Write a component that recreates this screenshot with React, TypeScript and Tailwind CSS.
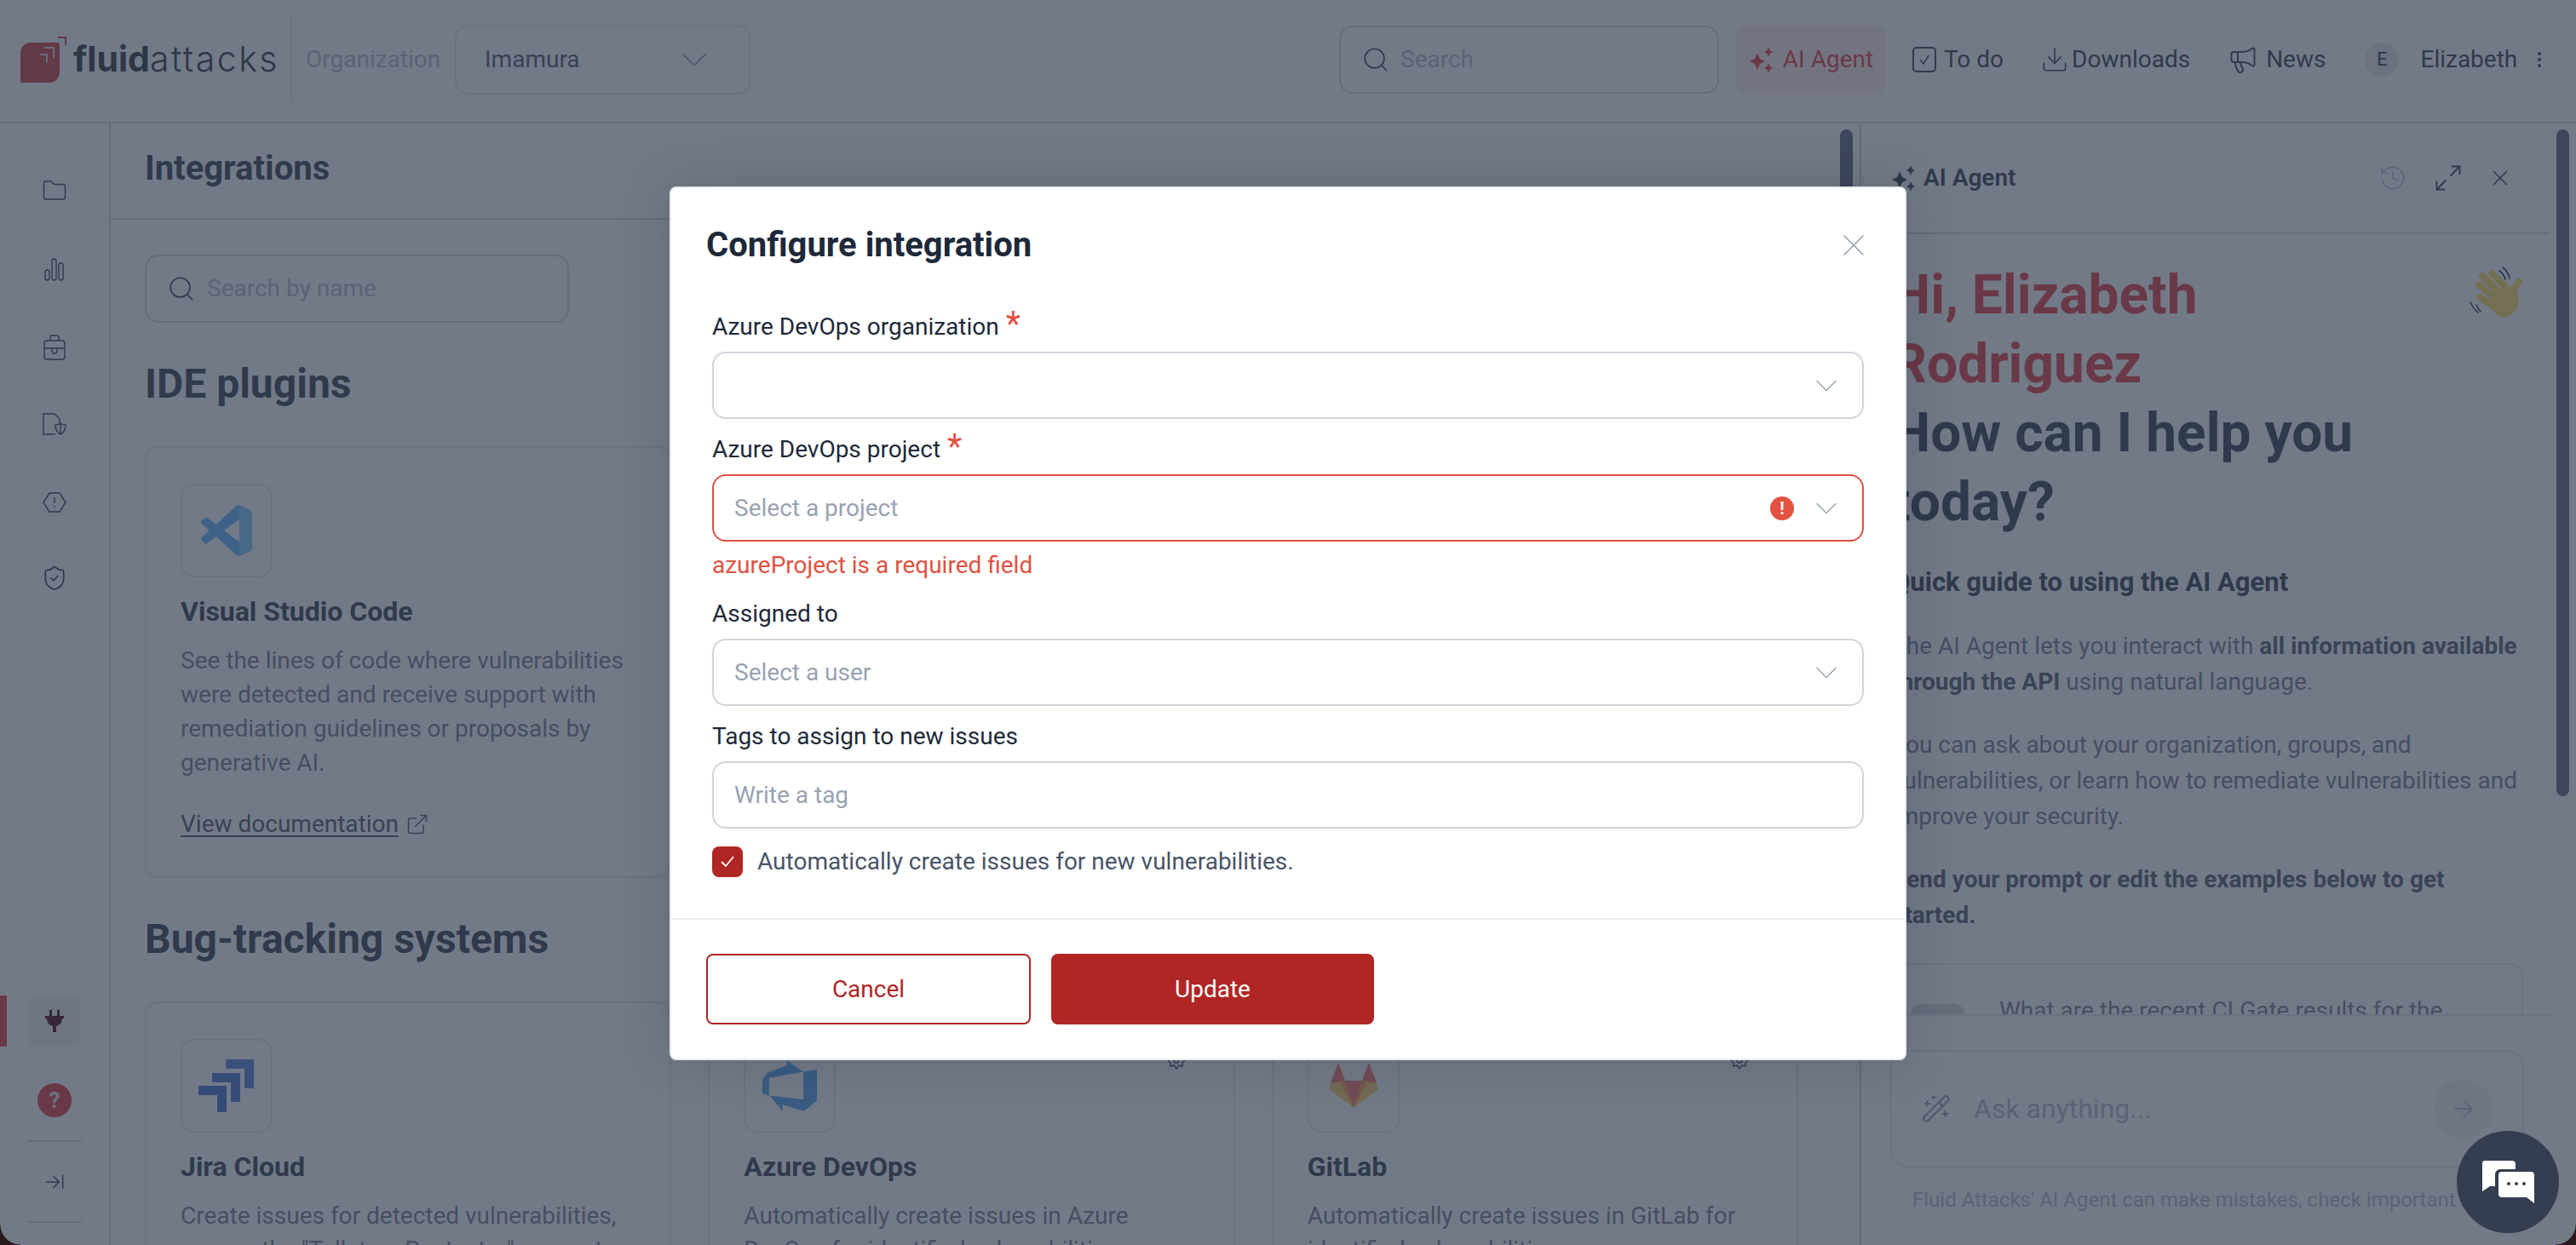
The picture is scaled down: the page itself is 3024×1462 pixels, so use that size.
import {
  ArrowRight, ArrowRightToLine, ChevronDown, Download, ExternalLink, Folder, History, Maximize2,
  Megaphone, Search, ShieldCheck, WandSparkles, X,
} from 'lucide-react';
import type { ReactNode } from 'react';

function Sparkle({ size = 32, className = '' }: { size?: number; className?: string }) {
  return (
    <svg width={size} height={size} viewBox="0 0 32 32" className={className} fill="currentColor">
      <path d="M11 8 14 15 20 18 14 21 11 28 8 21 2 18 8 15Z" />
      <path d="M24 1 25.5 5 29 7 25.5 9 24 13 22.5 9 19 7 22.5 5Z" />
      <path d="M24 20 25.5 24 29 26 25.5 28 24 32 22.5 28 19 26 22.5 24Z" />
    </svg>
  );
}

function Logo() {
  return (
    <svg width="56" height="56" viewBox="0 0 56 56" className="shrink-0">
      <path d="M2 20a12 12 0 0 1 12-12h32a2 2 0 0 1 2 2v33a12 12 0 0 1-12 12H2Z" fill="#d65f5e" />
      <path d="M30 14h11v12M25 22h8v10" stroke="#d9dbe0" strokeWidth="2" fill="none" />
      <path d="M46 2h9v9" stroke="#d65f5e" strokeWidth="2" fill="none" />
    </svg>
  );
}

function TopLink({ icon, label, gap = 'gap-[9px]', textClass = 'text-[#555f6e]' }: { icon: ReactNode; label: string; gap?: string; textClass?: string }) {
  return (
    <div className={`flex items-center text-[28px] ${gap} ${textClass}`}>
      {icon}
      <span>{label}</span>
    </div>
  );
}

function Header() {
  return (
    <header className="flex h-[145px] shrink-0 items-center border-b-2 border-[#dcdcde] pb-[4px] pl-[22px]">
      <Logo />
      <div className="ml-[8px] w-[255px] font-['Inter',sans-serif] text-[41px] leading-none text-[#525762]">
        <span className="font-bold">fluid</span>
        <span className="font-light tracking-[2.5px]">attacks</span>
      </div>
      <div className="h-[100px] w-[2px] bg-[#ebebed]" />
      <span className="ml-[16px] w-[175px] text-[28px] text-[#c0c5d2]">Organization</span>
      <div className="flex h-[82px] w-[347px] items-center justify-between rounded-[16px] border-2 border-[#ebebed] pl-[33px] pr-[37px] text-[28px] text-[#6b7484]">
        <span>Imamura</span>
        <ChevronDown size={54} strokeWidth={0.7} className="text-[#9ba2b1]" />
      </div>
      <div className="ml-[691px] flex h-[80px] w-[446px] items-center rounded-[16px] border-2 border-[#dcdcde] pl-[24px] text-[28px] text-[#c0c5d2]">
        <Search size={34} strokeWidth={1.2} className="text-[#555f6e]" />
        <span className="ml-[12px]">Search</span>
      </div>
      <div className="ml-[19px] flex h-[80px] w-[177px] items-center justify-center rounded-[12px] bg-[#fff1f0]">
        <TopLink icon={<Sparkle size={32} className="text-[#e85c5f]" />} label="AI Agent" textClass="text-[#e85c5f]" />
      </div>
      <div className="ml-[31px] flex items-center">
        <TopLink
          label="To do"
          icon={
            <svg width="28" height="32" viewBox="0 0 28 32" fill="none" stroke="currentColor" strokeWidth="2">
              <rect x="1" y="2" width="26" height="28" rx="4" />
              <path d="m9 16 4 5 6-10" strokeWidth="1.5" />
            </svg>
          }
        />
      </div>
      <div className="ml-[43px]">
        <TopLink icon={<Download size={34} strokeWidth={1.2} />} label="Downloads" gap="gap-[3px]" />
      </div>
      <div className="ml-[44px]">
        <TopLink icon={<Megaphone size={36} strokeWidth={1.3} />} label="News" />
      </div>
      <div className="ml-[46px] flex h-[40px] w-[40px] items-center justify-center rounded-full bg-[#ebebed] text-[22px] text-[#555f6e]">E</div>
      <span className="ml-[25px] text-[28px] text-[#555f6e]">Elizabeth</span>
      <div className="ml-[24px] flex flex-col gap-[3px]">
        <i className="h-[4px] w-[4px] rounded-full bg-[#555f6e]" />
        <i className="h-[4px] w-[4px] rounded-full bg-[#555f6e]" />
        <i className="h-[4px] w-[4px] rounded-full bg-[#555f6e]" />
      </div>
    </header>
  );
}

function Sidebar() {
  const stroke = 'text-[#555f6e]';
  return (
    <aside className="flex w-[130px] shrink-0 flex-col items-center border-r-2 border-[#dcdcde]">
      <Folder size={30} strokeWidth={1.2} className={`mt-[64px] ${stroke}`} />
      <svg width="30" height="30" viewBox="0 0 30 30" fill="none" stroke="currentColor" strokeWidth="1.4" className={`mt-[62px] ${stroke}`}>
        <rect x="4" y="16" width="5" height="12" rx="2.5" />
        <rect x="12" y="3" width="5" height="25" rx="2.5" />
        <rect x="20" y="8" width="5" height="20" rx="2.5" />
      </svg>
      <svg width="30" height="34" viewBox="0 0 30 34" fill="none" stroke="currentColor" strokeWidth="1.4" className={`mt-[60px] ${stroke}`}>
        <rect x="3" y="9" width="24" height="22" rx="3" />
        <path d="M10 9V5a2 2 0 0 1 2-2h6a2 2 0 0 1 2 2v4M3 18h24" />
        <path d="M12 18v3a3 3 0 0 0 6 0v-3" />
      </svg>
      <svg width="32" height="30" viewBox="0 0 32 30" fill="none" stroke="currentColor" strokeWidth="1.4" className={`mt-[58px] ${stroke}`}>
        <path d="M17 27H3V3h13l6 6v5" />
        <path d="M23 14c2 1.500 4 2 6 2 0 6-2 9-6 11-4-2-6-5-6-11 2 0 4-.5 6-2ZM23 14v13" />
      </svg>
      <svg width="30" height="28" viewBox="0 0 30 28" fill="none" stroke="currentColor" strokeWidth="1.4" className={`mt-[63px] ${stroke}`}>
        <path d="M9 3h12l7 11-7 11H9L2 14Z" />
        <path d="M15 8v7M15 18v2" />
      </svg>
      <ShieldCheck size={32} strokeWidth={1.3} className={`mt-[59px] ${stroke}`} />
      <div className="mt-[474px] flex h-[60px] w-full items-center">
        <div className="h-full w-[8px] bg-[#e85c5f]" />
        <div className="ml-[26px] flex h-full w-[60px] items-center justify-center rounded-[8px] bg-[#f5f2f4]">
          <svg width="22" height="26" viewBox="0 0 22 26" fill="#6a2f45">
            <rect x="5" y="0" width="3" height="8" />
            <rect x="14" y="0" width="3" height="8" />
            <path d="M0 7h22v3h-2c0 5-3 8-7 9v7H9v-7c-4-1-7-4-7-9H0Z" />
          </svg>
        </div>
      </div>
      <div className="mt-[43px] flex h-[40px] w-[40px] items-center justify-center rounded-full bg-[#e85c5f] text-[26px] font-bold leading-none text-[#ebebed]">?</div>
      <div className="mt-[27px] h-[2px] w-[64px] bg-[#dcdcde]" />
      <ArrowRightToLine size={26} strokeWidth={1.3} className={`mt-[34px] ${stroke}`} />
      <div className="mt-[33px] h-[2px] w-[64px] bg-[#dcdcde]" />
    </aside>
  );
}

const vsCode = (
  <svg width="60" height="60" viewBox="0 0 24 24">
    <path
      fill="#7cc4ff"
      d="M23.15 2.587L18.21.21a1.494 1.494 0 0 0-1.705.29l-9.46 8.63-4.12-3.128a.999.999 0 0 0-1.276.057L.327 7.261A1 1 0 0 0 .326 8.74L3.899 12 .326 15.26a1 1 0 0 0 .001 1.479L1.65 17.94a.999.999 0 0 0 1.276.057l4.12-3.128 9.46 8.63a1.492 1.492 0 0 0 1.704.29l4.942-2.377A1.5 1.5 0 0 0 24 20.06V3.939a1.5 1.5 0 0 0-.85-1.352zm-5.146 14.861L10.826 12l7.178-5.448v10.896z"
    />
    <path fill="#9ad2ff" d="M18.004 0v24l5.146-2.33a1.5 1.5 0 0 0 .85-1.35V3.94a1.500 1.500 0 0 0-.85-1.353L18.2.2Z" />
  </svg>
);
const jira = (
  <svg width="66" height="62" viewBox="0 0 66 62">
    <path d="M32 0h33v34h-11V11H32Z" fill="#7398e0" />
    <path d="M16 16h33v34H38V27H16Z" fill="#6a90dc" />
    <path d="M0 31h33v31H22V42H0Z" fill="#6188d8" />
  </svg>
);
const azure = (
  <svg width="64" height="60" viewBox="0 0 24 24" preserveAspectRatio="none">
    <path
      fill="#72b4f5"
      d="M0 8.877 2.247 5.91l8.405-3.416V.022l7.37 5.393L2.966 8.338v8.225L0 15.707zm24-4.45v14.651l-5.753 4.9-9.303-3.057v3.056l-5.978-7.416 15.057 1.798V5.415z"
    />
  </svg>
);
const gitlab = (
  <svg width="58" height="54" viewBox="0 0 58 54">
    <path d="M29 53 0 31 11 0l8 21h20l8-21 11 31Z" fill="#ffd783" />
    <path d="M29 53 19 21h20Z" fill="#ff8d84" />
    <path d="M11 0l8 21L2 24ZM47 0l-8 21 17 3Z" fill="#ff8d84" />
    <path d="M29 53 19 21 12 21ZM29 53 39 21h7Z" fill="#ffb070" />
  </svg>
);

function Card({
  logo, title, lines, gear, link,
}: { logo: ReactNode; title: string; lines: string[]; gear?: boolean; link?: boolean }) {
  return (
    <div className="relative rounded-[16px] border-2 border-[#ebebed] px-[40px] pt-[42px] pb-[41px]">
      {gear && (
        <svg width="22" height="22" viewBox="0 0 22 22" fill="none" stroke="#555f6e" strokeWidth="1.3" className="absolute right-[56px] top-[56px]">
          <path d="M11 1l3 3 4 1v4l3 2-3 3v4l-4-1-3 4-3-4-4 1v-4l-3-3 3-2V5l4-1Z" />
          <circle cx="11" cy="11" r="3" />
        </svg>
      )}
      <div className="flex h-[110px] w-[108px] items-center justify-center rounded-[16px] border-2 border-[#ebebed]">{logo}</div>
      <h3 className="mt-[20px] text-[32px] font-bold leading-[40px] text-[#555f6e]">{title}</h3>
      <div className="mt-[18px] text-[28px] leading-[40px] text-[#8c93a5]">
        {lines.map((l) => (
          <p key={l} className="whitespace-nowrap">{l}</p>
        ))}
      </div>
      {link && (
        <div className="mt-[32px] flex items-center gap-[8px] text-[28px] leading-[40px] text-[#6b7484]">
          <span className="underline underline-offset-4">View documentation</span>
          <ExternalLink size={28} strokeWidth={1.3} />
        </div>
      )}
    </div>
  );
}

function MainContent() {
  return (
    <main className="relative h-full w-[2055px] shrink-0 overflow-hidden border-r-2 border-[#dcdcde]">
      <div className="flex h-[113px] items-center border-b-2 border-[#dcdcde] pb-[6px] pl-[40px] text-[40px] font-bold text-[#555f6e]">Integrations</div>
      <div className="pl-[40px]">
        <div className="mt-[41px] flex h-[80px] w-[498px] items-center rounded-[16px] border-2 border-[#dcdcde] pl-[24px] text-[28px] text-[#c0c5d2]">
          <Search size={34} strokeWidth={1.2} className="text-[#555f6e]" />
          <span className="ml-[13px]">Search by name</span>
        </div>
        <h2 className="mt-[44px] text-[48px] font-bold leading-[56px] text-[#555f6e]">IDE plugins</h2>
        <div className="mt-[45px] grid w-[1941px] grid-cols-3 gap-x-[43px]">
          <Card
            logo={vsCode}
            title="Visual Studio Code"
            link
            lines={[
              'See the lines of code where vulnerabilities',
              'were detected and receive support with',
              'remediation guidelines or proposals by',
              'generative AI.',
            ]}
          />
        </div>
        <h2 className="mt-[44px] text-[48px] font-bold leading-[56px] text-[#555f6e]">Bug-tracking systems</h2>
        <div className="mt-[45px] grid w-[1941px] grid-cols-3 gap-x-[43px]">
          <Card logo={jira} title="Jira Cloud" lines={['Create issues for detected vulnerabilities,', 'access the "Talk to a Pentester" support']} />
          <Card logo={azure} title="Azure DevOps" gear lines={['Automatically create issues in Azure', 'DevOps for identified vulnerabilities']} />
          <Card logo={gitlab} title="GitLab" gear lines={['Automatically create issues in GitLab for', 'identified vulnerabilities']} />
        </div>
      </div>
      <div className="absolute right-[8px] top-[7px] h-[700px] w-[15px] rounded-full bg-[#767f93]" />
    </main>
  );
}

function WaveHand() {
  return (
    <svg width="100" height="100" viewBox="0 0 100 100" fill="none" strokeLinecap="round">
      <g stroke="#ffe37d" strokeWidth="8">
        <path d="M34 34 54 54M45 31 64 50M30 44 50 62M31 59 50 72M66 56 77 41" />
      </g>
      <path d="M46 50 72 46c6 10 7 24-2 32-7 6-15 6-20 0-6-6-9-16-4-28Z" fill="#ffe37d" />
      <path d="M54 28c3 2 6 6 7 10M58 24c4 3 7 7 8 13M27 68c1 3 3 6 5 8M20 65c2 4 5 9 9 12" stroke="#4c5568" strokeWidth="1.6" />
    </svg>
  );
}

function AgentPanel() {
  return (
    <section className="relative h-full flex-1 overflow-hidden">
      <div className="mr-[30px] flex h-[130px] items-center border-b-2 border-[#dcdcde] pl-[34px] pr-[44px]">
        <Sparkle size={32} className="text-[#555f6e]" />
        <span className="ml-[7px] text-[28px] font-semibold text-[#555f6e]">AI Agent</span>
        <History size={34} strokeWidth={1.1} className="ml-auto text-[#c0c5d2]" />
        <Maximize2 size={36} strokeWidth={1.3} className="ml-[30px] text-[#555f6e]" />
        <X size={30} strokeWidth={1.3} className="ml-[28px] text-[#555f6e]" />
      </div>
      <div className="pl-[36px] pr-[60px]">
        <div className="relative mt-[31px] text-[64px] font-bold leading-[81px]">
          <p className="text-[#e85c5f]">Hi, Elizabeth</p>
          <p className="text-[#e85c5f]">Rodriguez</p>
          <p className="text-[#555f6e]">How can I help you</p>
          <p className="text-[#555f6e]">today?</p>
          <div className="absolute right-[-16px] top-[-16px]">
            <WaveHand />
          </div>
        </div>
        <p className="mt-[33px] text-[31px] font-bold leading-[42px] text-[#555f6e]">Quick guide to using the AI Agent</p>
        <p className="mt-[33px] text-[28px] leading-[42px] text-[#8c93a5]">
          The AI Agent lets you interact with <b className="font-bold text-[#6f7888]">all information available through the API</b> using natural language.
        </p>
        <p className="mt-[32px] text-[28px] leading-[42px] text-[#8c93a5]">
          You can ask about your organization, groups, and vulnerabilities, or learn how to remediate vulnerabilities and improve your security.
        </p>
        <p className="mt-[32px] text-[28px] font-bold leading-[42px] text-[#6f7888]">Send your prompt or edit the examples below to get started.</p>
        <div className="mt-[35px] flex h-[120px] w-[741px] gap-[41px] rounded-t-[16px] border-2 border-[#ebebed] pl-[20px] pt-[34px]">
          <div className="mt-[12px] h-[60px] w-[63px] rounded-[12px] bg-[#dcdcde]" />
          <p className="text-[28px] leading-[40px] text-[#8c93a5]">What are the recent CI Gate results for the</p>
        </div>
      </div>
      <div className="absolute left-0 right-[30px] top-[1046px] h-[271px] border-t-2 border-[#ebebed] bg-white pl-[34px]">
        <div className="mt-[40px] flex h-[138px] w-[744px] items-center rounded-[20px] border-2 border-[#ebebed] pl-[34px] pr-[34px]">
          <WandSparkles size={36} strokeWidth={1.2} className="text-[#9ba2b1]" />
          <span className="ml-[26px] text-[32px] text-[#c0c5d2]">Ask anything...</span>
          <div className="ml-auto flex h-[70px] w-[70px] items-center justify-center rounded-full bg-[#f5f5f6]">
            <ArrowRight size={34} strokeWidth={1.3} className="text-[#c0c5d2]" />
          </div>
        </div>
        <p className="mt-[20px] whitespace-nowrap pl-[26px] text-[24px] text-[#c0c5d2]">Fluid Attacks' AI Agent can make mistakes, check important info.</p>
      </div>
      <div className="absolute right-[8px] top-[7px] h-[783px] w-[15px] rounded-full bg-[#767f93]" />
    </section>
  );
}

function FieldLabel({ text, required }: { text: string; required?: boolean }) {
  return (
    <div className="flex h-[36px] items-center text-[28px] leading-[36px] text-[#1d2939]">
      {text}
      {required && <span className="relative top-[-3px] ml-[8px] text-[40px] leading-none text-[#e25141]">*</span>}
    </div>
  );
}

function SelectBox({ placeholder, error }: { placeholder?: string; error?: boolean }) {
  return (
    <div className={`mt-[11px] flex h-[79px] items-center rounded-[16px] border-[2px] pl-[24px] pr-[20px] text-[28px] text-[#98a2b3] ${error ? 'border-[#e25141]' : 'border-[#d0d5dd]'}`}>
      <span>{placeholder}</span>
      {error && (
        <div className="ml-auto mr-[16px] flex h-[28px] w-[28px] items-center justify-center rounded-full bg-[#e25141] text-[20px] font-bold leading-none text-white">!</div>
      )}
      <ChevronDown size={44} strokeWidth={0.8} className={`text-[#98a2b3] ${error ? '' : 'ml-auto'}`} />
    </div>
  );
}

function Modal() {
  return (
    <div className="absolute left-[786px] top-[219px] flex h-[1026px] w-[1452px] flex-col rounded-[8px] border-2 border-[#eaecf0] bg-white shadow-[0_0_60px_rgba(16,24,40,0.18)]">
      <div className="flex h-[118px] shrink-0 items-center justify-between pl-[41px] pr-[38px] pt-[16px]">
        <h1 className="text-[40px] font-bold leading-[48px] text-[#1d2939]">Configure integration</h1>
        <X size={44} strokeWidth={0.9} className="text-[#98a2b3]" />
      </div>
      <div className="h-[739px] shrink-0 pl-[48px] pr-[48px]">
        <div className="mt-[27px]">
          <FieldLabel text="Azure DevOps organization" required />
          <SelectBox />
        </div>
        <div className="mt-[18px]">
          <FieldLabel text="Azure DevOps project" required />
          <SelectBox placeholder="Select a project" error />
          <p className="mt-[10px] text-[28px] leading-[36px] text-[#e25141]">azureProject is a required field</p>
        </div>
        <div className="mt-[21px]">
          <FieldLabel text="Assigned to" />
          <SelectBox placeholder="Select a user" />
        </div>
        <div className="mt-[18px]">
          <FieldLabel text="Tags to assign to new issues" />
          <div className="mt-[11px] flex h-[79px] items-center rounded-[16px] border-[2px] border-[#d0d5dd] pl-[24px] text-[28px] text-[#98a2b3]">Write a tag</div>
        </div>
        <div className="mt-[18px] flex items-center gap-[17px]">
          <div className="flex h-[36px] w-[36px] items-center justify-center rounded-[8px] bg-[#b02624]">
            <svg width="18" height="16" viewBox="0 0 18 16" fill="none" stroke="#fff" strokeWidth="1.8">
              <path d="m2 8 5 5L16 2" />
            </svg>
          </div>
          <span className="text-[28px] text-[#475467]">Automatically create issues for new vulnerabilities.</span>
        </div>
      </div>
      <div className="flex flex-1 gap-[24px] border-t-2 border-[#eaecf0] pl-[41px] pt-[40px]">
        <button className="h-[83px] w-[381px] rounded-[8px] border-[2px] border-[#b02624] bg-white text-[28px] text-[#b02624]">Cancel</button>
        <button className="h-[83px] w-[379px] rounded-[8px] bg-[#b02624] text-[28px] text-white">Update</button>
      </div>
    </div>
  );
}

export default function App() {
  return (
    <div className="relative flex h-[1462px] w-[3024px] flex-col overflow-hidden bg-white font-['Roboto',sans-serif]">
      <Header />
      <div className="flex min-h-0 flex-1">
        <Sidebar />
        <MainContent />
        <AgentPanel />
      </div>
      <div className="absolute inset-0 bg-[#162137]/60" />
      <div className="absolute bottom-0 left-0 h-[24px] w-[24px] bg-[radial-gradient(circle_at_100%_0%,transparent_23px,#2a1a1c_24px)]" />
      <div className="absolute bottom-0 right-0 h-[24px] w-[24px] bg-[radial-gradient(circle_at_0%_0%,transparent_23px,#2a1a1c_24px)]" />
      <div className="absolute bottom-[14px] left-[2884px] flex h-[120px] w-[120px] items-center justify-center rounded-full bg-[#343e50]">
        <svg width="62" height="50" viewBox="0 0 62 50" fill="#fff">
          <path d="M4 0h32a4 4 0 0 1 4 4v6H22a6 6 0 0 0-6 6v14H10L1 36V3a3 3 0 0 1 3-3Z" />
          <path d="M24 13h34a4 4 0 0 1 4 4v33l-9-7H24a4 4 0 0 1-4-4V17a4 4 0 0 1 4-4Z" />
          <circle cx="32" cy="27" r="2" fill="#343e50" />
          <circle cx="41" cy="27" r="2" fill="#343e50" />
          <circle cx="50" cy="27" r="2" fill="#343e50" />
        </svg>
      </div>
      <Modal />
    </div>
  );
}
